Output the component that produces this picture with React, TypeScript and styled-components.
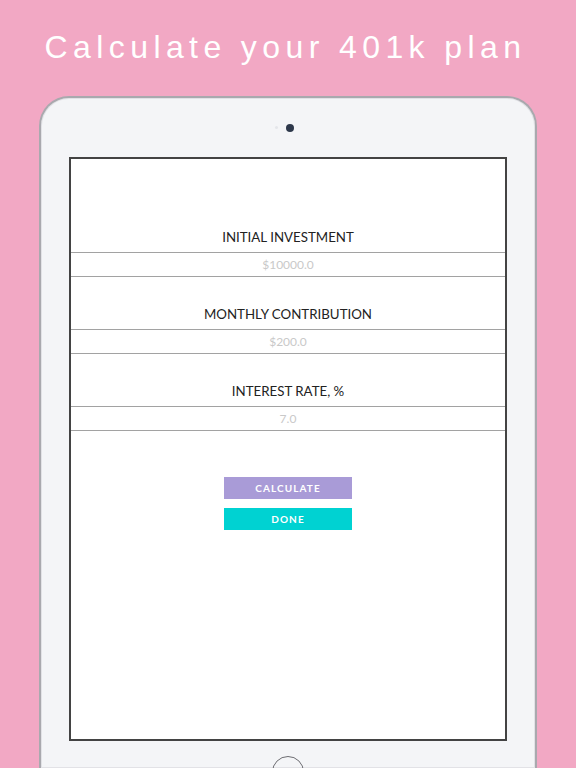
import React from 'react'
import styled, { createGlobalStyle } from 'styled-components'

const GlobalStyle = createGlobalStyle`
  html, body {
    margin: 0;
    padding: 0;
    height: 768px;
    overflow: hidden;
    background: #f2a8c4;
  }
  * {
    box-sizing: border-box;
  }
`

const fields = [
  { label: 'INITIAL INVESTMENT', value: '$10000.0' },
  { label: 'MONTHLY CONTRIBUTION', value: '$200.0' },
  { label: 'INTEREST RATE, %', value: '7.0' },
]

const App: React.FC = () => {
  return (
    <Page>
      <GlobalStyle />
      <Title>Calculate your 401k plan</Title>
      <Device>
        <TopBezel>
          <Sensor />
          <Camera />
        </TopBezel>
        <Screen>
          {fields.map(f => (
            <Section key={f.label}>
              <Label>{f.label}</Label>
              <Field>{f.value}</Field>
            </Section>
          ))}
          <Buttons>
            <Button color="#a99bd7">CALCULATE</Button>
            <Button color="#00d2d2">DONE</Button>
          </Buttons>
        </Screen>
        <HomeButton />
      </Device>
    </Page>
  )
}

const Page = styled.div`
  height: 768px;
  overflow: hidden;
  display: flex;
  flex-direction: column;
  align-items: center;
  padding-top: 27px;
`

const Title = styled.h1`
  margin: 0;
  height: 40px;
  line-height: 40px;
  padding-right: 5px;
  font-family: 'Liberation Sans', Arial, sans-serif;
  font-size: 32px;
  font-weight: 400;
  letter-spacing: 5.4px;
  color: #ffffff;
`

const Device = styled.div`
  margin-top: 29px;
  width: 498px;
  height: 672px;
  flex-shrink: 0;
  overflow: hidden;
  background: #f4f5f7;
  border-radius: 30px 30px 0 0;
  border: 2px solid #a9a9ae;
  border-bottom: none;
  box-shadow: inset 0 0 0 1px #e2e2e6;
  padding: 0 27px;
  display: flex;
  flex-direction: column;
  align-items: center;
`

const TopBezel = styled.div`
  height: 59px;
  width: 100%;
  flex-shrink: 0;
  display: flex;
  align-items: center;
  justify-content: center;
  gap: 8px;
  padding-right: 8px;
`

const Camera = styled.div`
  width: 8px;
  height: 8px;
  border-radius: 50%;
  background: #2d384b;
`

const Sensor = styled.div`
  width: 3px;
  height: 3px;
  border-radius: 50%;
  background: #e4e6ea;
`

const Screen = styled.div`
  width: 438px;
  height: 584px;
  flex-shrink: 0;
  background: #ffffff;
  border: 2px solid #434343;
  padding-top: 41px;
  display: flex;
  flex-direction: column;
`

const Section = styled.div`
  display: flex;
  flex-direction: column;
`

const Label = styled.div`
  height: 52px;
  padding-bottom: 5px;
  display: flex;
  align-items: flex-end;
  justify-content: center;
  font-family: Lato, 'Open Sans', sans-serif;
  font-size: 13.3px;
  line-height: 20px;
  color: #222222;
`

const Field = styled.div`
  height: 25px;
  border-top: 1.5px solid #a2a2a2;
  border-bottom: 1.5px solid #a2a2a2;
  display: flex;
  align-items: center;
  justify-content: center;
  font-family: Lato, 'Open Sans', sans-serif;
  font-size: 12px;
  color: #c9c9c9;
`

const Buttons = styled.div`
  margin-top: 46px;
  display: flex;
  flex-direction: column;
  align-items: center;
  gap: 9px;
`

const Button = styled.button<{ color: string }>`
  width: 128px;
  height: 22px;
  border: none;
  padding: 0;
  background: ${p => p.color};
  color: #ffffff;
  font-family: Lato, 'Open Sans', sans-serif;
  font-size: 10px;
  font-weight: 700;
  letter-spacing: 1.1px;
  cursor: pointer;
`

const HomeButton = styled.div`
  margin-top: 15px;
  width: 32px;
  height: 32px;
  flex-shrink: 0;
  border-radius: 50%;
  border: 1.5px solid #6d6d72;
`

export default App
